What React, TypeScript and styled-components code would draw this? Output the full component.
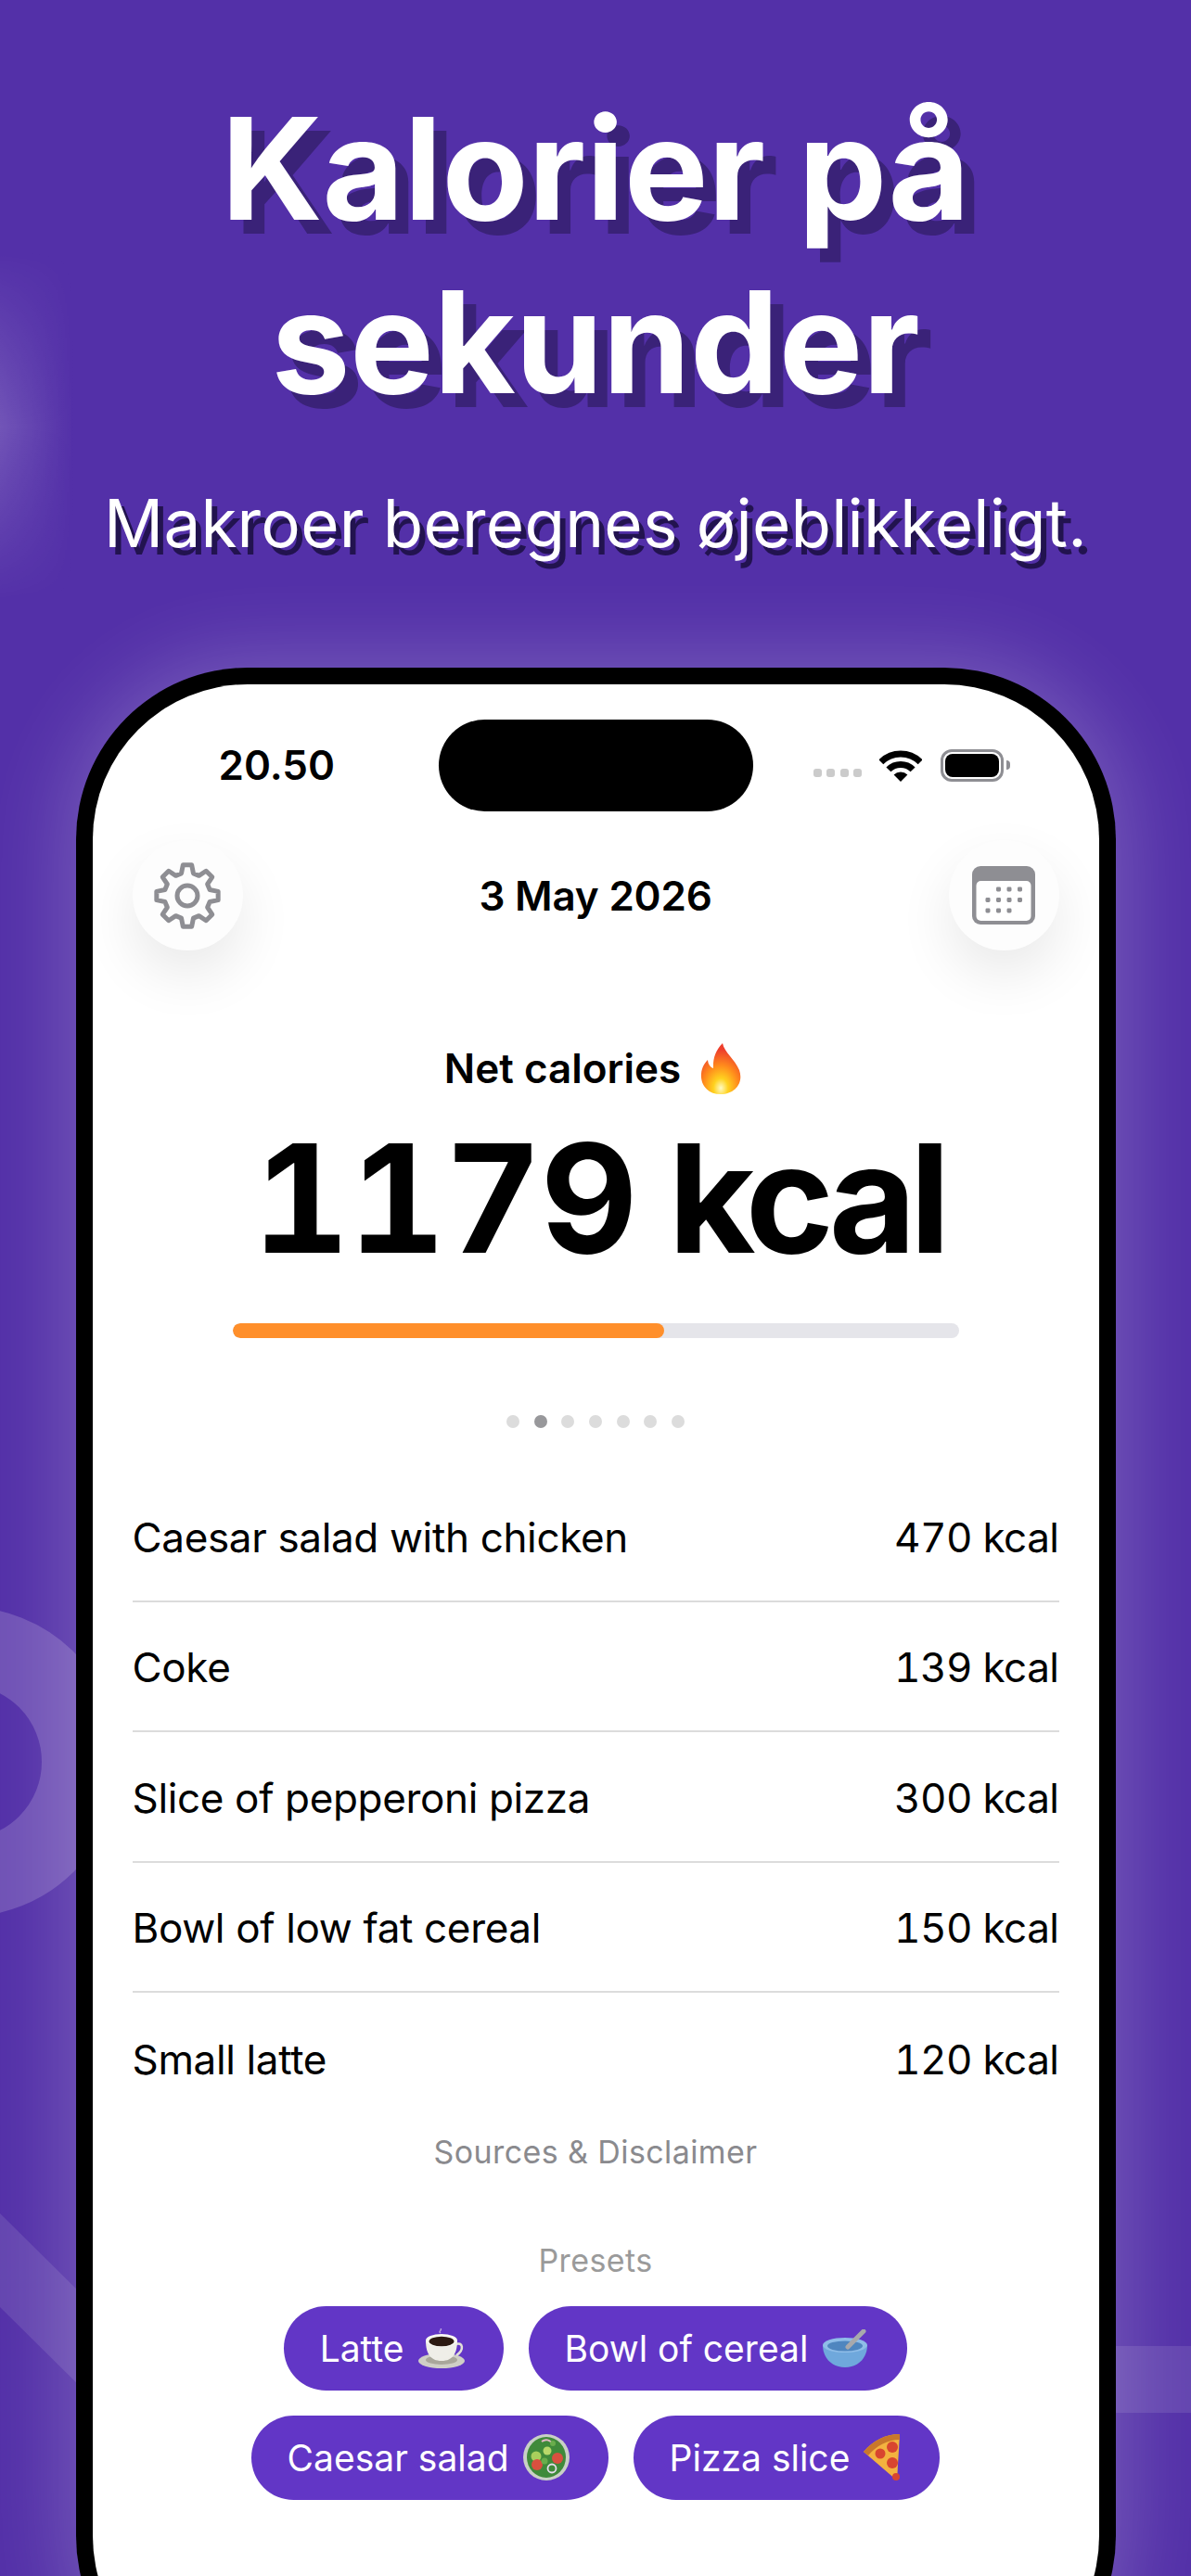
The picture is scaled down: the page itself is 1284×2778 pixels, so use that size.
import React from "react";
import styled, { createGlobalStyle } from "styled-components";

const Global = createGlobalStyle`
  html, body { margin: 0; padding: 0; background: #5330a8; }
  * { box-sizing: border-box; }
`;

const Page = styled.div`
  position: relative;
  width: 1284px;
  height: 2778px;
  overflow: hidden;
  background: #5330a8;
  font-family: Inter, "Liberation Sans", sans-serif;
  display: flex;
  flex-direction: column;
  align-items: center;
`;
const Decor = styled.svg`
  position: absolute;
  inset: 0;
  width: 1284px;
  height: 2778px;
`;
const Headline = styled.h1`
  position: relative;
  margin: 89px 0 0;
  font-size: 152px;
  line-height: 187px;
  font-weight: 700;
  letter-spacing: -0.3px;
  color: #fff;
  text-align: center;
  text-shadow: 14px 15px 0 #3a2278;
`;
const Subtitle = styled.p`
  position: relative;
  margin: 58px 0 0;
  font-size: 71px;
  line-height: 86px;
  font-weight: 400;
  letter-spacing: 0.2px;
  white-space: nowrap;
  color: #fff;
  text-shadow: 6px 8px 0 #22134f;
`;
const Phone = styled.div`
  position: relative;
  flex: none;
  margin-top: 113px;
  width: 1121px;
  height: 2200px;
  padding: 18px;
  background: #000;
  border-radius: 185px;
  box-shadow: 0 0 90px 10px rgba(255, 255, 255, 0.22);
`;
const Screen = styled.div`
  height: 100%;
  background: #fff;
  border-radius: 167px;
  overflow: hidden;
  display: flex;
  flex-direction: column;
`;
const StatusBar = styled.div`
  display: grid;
  grid-template-columns: 373px 339px 1fr;
  padding-top: 38px;
  height: 168px;
`;
const Time = styled.div`
  padding-left: 136px;
  font-size: 44px;
  line-height: 99px;
  font-weight: 600;
  color: #000;
`;
const Island = styled.div`
  background: #000;
  border-radius: 50px;
  height: 99px;
`;
const StatusIcons = styled.div`
  display: flex;
  align-items: flex-start;
  padding: 33px 0 0 65px;
`;
const Signal = styled.div`
  display: flex;
  gap: 5.5px;
  margin: 20px 19px 0 0;
`;
const SignalDot = styled.span`
  width: 9px;
  height: 9px;
  border-radius: 3px;
  background: #cbcbcb;
`;
const Battery = styled.div`
  position: relative;
  margin-left: 20px;
  margin-top: -1px;
  width: 68px;
  height: 35px;
  border: 3px solid #8e8e93;
  border-radius: 12px;
  padding: 2px;
`;
const BatteryFill = styled.div`
  height: 100%;
  background: #000;
  border-radius: 8px;
`;
const BatteryNub = styled.span`
  position: absolute;
  right: -10px;
  top: 9px;
  width: 4px;
  height: 10px;
  background: #8e8e93;
  border-radius: 0 4px 4px 0;
`;
const Content = styled.div`
  padding: 0 43px;
  display: flex;
  flex-direction: column;
`;
const TopRow = styled.div`
  display: flex;
  justify-content: space-between;
  align-items: center;
  height: 119px;
`;
const RoundButton = styled.div`
  width: 119px;
  height: 119px;
  border-radius: 50%;
  background: #fdfdfd;
  box-shadow: 0 26px 60px rgba(0, 0, 0, 0.09);
  display: flex;
  align-items: center;
  justify-content: center;
`;
const DateText = styled.div`
  font-size: 44px;
  font-weight: 600;
  color: #000;
  letter-spacing: -0.2px;
`;
const NetLabel = styled.div`
  margin-top: 99px;
  padding-right: 5px;
  height: 56px;
  display: flex;
  align-items: center;
  justify-content: center;
  gap: 21px;
  font-size: 44px;
  font-weight: 600;
  color: #000;
`;
const BigNumber = styled.div`
  margin-top: 24px;
  padding-left: 6px;
  font-size: 162px;
  line-height: 176px;
  font-weight: 700;
  text-align: center;
  color: #000;
  white-space: nowrap;
  word-spacing: -4px;
`;
const BigDigits = styled.span`
  font-feature-settings: "tnum" 1;
  letter-spacing: -1.3px;
`;
const BigUnit = styled.span`
  letter-spacing: -7px;
`;
const Track = styled.div`
  margin: 47px 108px 0;
  height: 16px;
  border-radius: 8px;
  background: #e5e5ea;
  overflow: hidden;
`;
const Fill = styled.div`
  height: 100%;
  border-radius: 8px;
  background: #ff8f2b;
`;
const Dots = styled.div`
  margin-top: 83px;
  display: flex;
  justify-content: center;
  gap: 15.7px;
`;
const Dot = styled.span<{ $active?: boolean }>`
  width: 14px;
  height: 14px;
  border-radius: 50%;
  background: ${(p) => (p.$active ? "#98989b" : "#dcdcdc")};
`;
const List = styled.div`
  margin-top: 47px;
  display: flex;
  flex-direction: column;
`;
const Row = styled.div`
  height: 140.5px;
  padding-top: 3px;
  display: flex;
  justify-content: space-between;
  align-items: center;
  font-size: 44px;
  font-weight: 400;
  color: #000;
  border-bottom: 2px solid #dcdcdc;
  &:last-child { border-bottom: none; }
`;
const RowName = styled.span`
  letter-spacing: -0.35px;
`;
const RowKcal = styled.span`
  font-feature-settings: "tnum" 1;
  letter-spacing: -0.5px;
`;
const Sources = styled.div`
  margin-top: 9px;
  text-align: center;
  font-size: 34px;
  line-height: 44px;
  letter-spacing: 0.4px;
  color: #8a8a8e;
`;
const PresetsTitle = styled.div`
  margin-top: 73px;
  text-align: center;
  font-size: 34px;
  line-height: 44px;
  letter-spacing: 0.4px;
  color: #9a9a9a;
`;
const Chips = styled.div`
  margin-top: 27px;
  display: flex;
  flex-wrap: wrap;
  justify-content: center;
  gap: 27px;
  padding: 0 100px;
`;
const Chip = styled.div`
  height: 91px;
  border-radius: 46px;
  padding: 0 42px 0 39px;
  background: #6236c6;
  color: #fff;
  font-size: 39px;
  display: flex;
  align-items: center;
  gap: 15px;
  white-space: nowrap;
`;

const gearPath = (() => {
  const pts: string[] = [];
  const c = 36, R = 33.5, r = 25;
  for (let i = 0; i < 8; i++) {
    const a = -90 + i * 45;
    [[a - 15, r], [a - 8, R], [a + 8, R], [a + 15, r]].forEach(([d, rad]) => {
      const t = (d * Math.PI) / 180;
      pts.push(`${(c + rad * Math.cos(t)).toFixed(2)} ${(c + rad * Math.sin(t)).toFixed(2)}`);
    });
  }
  return "M" + pts.join("L") + "Z";
})();

const Gear = () => (
  <svg width="72" height="72" viewBox="0 0 72 72" fill="none" stroke="#8e8e93" strokeWidth="5" strokeLinejoin="round">
    <path d={gearPath} />
    <circle cx="36" cy="36" r="11" />
  </svg>
);

const Calendar = () => {
  const cells = [[1, 0], [2, 0], [3, 0], [0, 1], [1, 1], [2, 1], [3, 1], [0, 2], [1, 2], [2, 2]];
  return (
    <svg width="68" height="63" viewBox="0 0 68 63">
      <rect width="68" height="63" rx="9" fill="#8e8e93" />
      <rect x="4.5" y="16" width="59" height="43" rx="5" fill="#fff" />
      {cells.map(([x, y]) => (
        <rect key={`${x}-${y}`} x={14.5 + x * 11.5} y={22.5 + y * 11.5} width="5" height="5" rx="1.4" fill="#8e8e93" />
      ))}
    </svg>
  );
};

const Wifi = () => (
  <svg width="46" height="34" viewBox="0 0 46 34" fill="none" stroke="#000" strokeWidth="7">
    <path d="M1.8 12.8A30 30 0 0 1 44.2 12.8" />
    <path d="M9.9 20.9A18.5 18.5 0 0 1 36.1 20.9" />
    <path d="M15.6 26.6A10.5 10.5 0 0 1 30.4 26.6L23 34Z" fill="#000" stroke="none" />
  </svg>
);

const Flame = () => (
  <svg width="45" height="55" viewBox="0 0 45 55">
    <defs>
      <radialGradient id="flame" cx="50%" cy="88%" r="75%">
        <stop offset="0" stopColor="#fffbc4" />
        <stop offset="0.25" stopColor="#ffd21f" />
        <stop offset="0.6" stopColor="#ff8a1c" />
        <stop offset="1" stopColor="#ee3f2c" />
      </radialGradient>
    </defs>
    <path fill="url(#flame)" d="M24 0C26 10 37 17 42 29C47 43 37 55 22 55C8 55 0 45 1 33C1.5 26 5 21 8 18C8.5 23 11 26 14 27C13.5 17 16 8 24 0Z" />
  </svg>
);

const Coffee = () => (
  <svg width="50" height="43" viewBox="0 0 50 43">
    <ellipse cx="25" cy="35" rx="25" ry="8" fill="#cfcfc6" />
    <ellipse cx="25" cy="34" rx="17" ry="5" fill="#a9a79b" />
    <path d="M40 17c8-3 10 6 1 12" fill="none" stroke="#e2e0d8" strokeWidth="2.5" />
    <path d="M8 13c0 14 5 22 17 22s17-8 17-22z" fill="#efeee8" />
    <ellipse cx="25" cy="13" rx="17" ry="7" fill="#f8f7f2" />
    <ellipse cx="25" cy="14" rx="13.5" ry="5.2" fill="#2c1a12" />
    <path d="M24 5c-3-2 2-3 0-5" fill="none" stroke="#d8c9e8" strokeWidth="1.5" opacity="0.7" />
  </svg>
);

const Bowl = () => (
  <svg width="50" height="41" viewBox="0 0 50 41">
    <path d="M1 17c0 14 10 24 24 24s24-10 24-24z" fill="#6fa8dc" />
    <ellipse cx="25" cy="17" rx="24" ry="8" fill="#8fbde8" />
    <ellipse cx="25" cy="18" rx="19" ry="5.5" fill="#4f86bf" />
    <path d="M28 19L45 2" stroke="#a8a9ac" strokeWidth="5" strokeLinecap="round" />
  </svg>
);

const Salad = () => (
  <svg width="50" height="50" viewBox="0 0 50 50">
    <ellipse cx="25" cy="25" rx="25" ry="25" fill="#c9d0c6" />
    <ellipse cx="25" cy="25" rx="21" ry="22" fill="#3f8a3a" />
    <circle cx="14" cy="24" r="5.5" fill="#a9cf5c" />
    <circle cx="26" cy="18" r="4.5" fill="#b8d86a" />
    <circle cx="15" cy="33" r="6" fill="#d9503f" />
    <circle cx="37" cy="26" r="6" fill="#d9503f" />
    <circle cx="31" cy="37" r="4.5" fill="none" stroke="#e6dcec" strokeWidth="1.8" />
    <path d="M20 8c4-3 9-2 11 2" fill="none" stroke="#e6b8c8" strokeWidth="2" />
    <circle cx="32" cy="10" r="3" fill="#69ad4c" />
    <circle cx="23" cy="29" r="3.5" fill="#69ad4c" />
  </svg>
);

const Pizza = () => (
  <svg width="40" height="50" viewBox="0 0 40 50">
    <path d="M36 50L0 19C10 7 24 0 39 0z" fill="#f3b23f" />
    <path d="M0 19C10 7 24 0 39 0l0 6C26 6 13 13 5 23z" fill="#c9772b" />
    <circle cx="31" cy="14" r="6" fill="#d8452f" />
    <circle cx="18" cy="21" r="5.5" fill="#d8452f" />
    <circle cx="31" cy="31" r="6" fill="#d8452f" />
    <circle cx="35" cy="46" r="4" fill="#d8452f" />
  </svg>
);

const items = [
  ["Caesar salad with chicken", "470 kcal"],
  ["Coke", "139 kcal"],
  ["Slice of pepperoni pizza", "300 kcal"],
  ["Bowl of low fat cereal", "150 kcal"],
  ["Small latte", "120 kcal"],
];
const presets: [string, React.ReactNode][] = [
  ["Latte", <Coffee />],
  ["Bowl of cereal", <Bowl />],
  ["Caesar salad", <Salad />],
  ["Pizza slice", <Pizza />],
];

export default function App() {
  return (
    <Page>
      <Global />
      <Decor viewBox="0 0 1284 2778" fill="none">
        <defs>
          <linearGradient id="strip" x1="0" y1="0" x2="1" y2="0">
            <stop offset="0" stopColor="#fff" stopOpacity="1" />
            <stop offset="1" stopColor="#fff" stopOpacity="0" />
          </linearGradient>
          <linearGradient id="fade" x1="0" y1="0" x2="0" y2="1">
            <stop offset="0" stopColor="#fff" stopOpacity="0" />
            <stop offset="0.5" stopColor="#fff" stopOpacity="1" />
            <stop offset="1" stopColor="#fff" stopOpacity="0" />
          </linearGradient>
          <mask id="stripMask">
            <rect x="0" y="270" width="80" height="380" fill="url(#fade)" />
          </mask>
        </defs>
        <rect x="0" y="270" width="80" height="380" fill="url(#strip)" fillOpacity="0.18" mask="url(#stripMask)" />
        <circle cx="-38" cy="1900" r="125" stroke="#fff" strokeOpacity="0.17" strokeWidth="84" />
        <polygon points="0,2387 100,2486 100,2587 0,2488" fill="#fff" fillOpacity="0.1" />
        <rect x="1190" y="2530" width="94" height="72" fill="#fff" fillOpacity="0.1" />
      </Decor>
      <Headline>
        Kalorier på
        <br />
        sekunder
      </Headline>
      <Subtitle>Makroer beregnes øjeblikkeligt.</Subtitle>
      <Phone>
        <Screen>
          <StatusBar>
            <Time>20.50</Time>
            <Island />
            <StatusIcons>
              <Signal>
                {[0, 1, 2, 3].map((i) => (
                  <SignalDot key={i} />
                ))}
              </Signal>
              <Wifi />
              <Battery>
                <BatteryFill />
                <BatteryNub />
              </Battery>
            </StatusIcons>
          </StatusBar>
          <Content>
            <TopRow>
              <RoundButton>
                <Gear />
              </RoundButton>
              <DateText>3 May 2026</DateText>
              <RoundButton>
                <Calendar />
              </RoundButton>
            </TopRow>
            <NetLabel>
              Net calories <Flame />
            </NetLabel>
            <BigNumber>
              <BigDigits>1179</BigDigits> <BigUnit>kcal</BigUnit>
            </BigNumber>
            <Track>
              <Fill style={{ width: "59.4%" }} />
            </Track>
            <Dots>
              {[0, 1, 2, 3, 4, 5, 6].map((i) => (
                <Dot key={i} $active={i === 1} />
              ))}
            </Dots>
            <List>
              {items.map(([name, kcal]) => (
                <Row key={name}>
                  <RowName>{name}</RowName>
                  <RowKcal>{kcal}</RowKcal>
                </Row>
              ))}
            </List>
            <Sources>Sources &amp; Disclaimer</Sources>
            <PresetsTitle>Presets</PresetsTitle>
            <Chips>
              {presets.map(([label, icon]) => (
                <Chip key={label}>
                  {label}
                  {icon}
                </Chip>
              ))}
            </Chips>
          </Content>
        </Screen>
      </Phone>
    </Page>
  );
}
